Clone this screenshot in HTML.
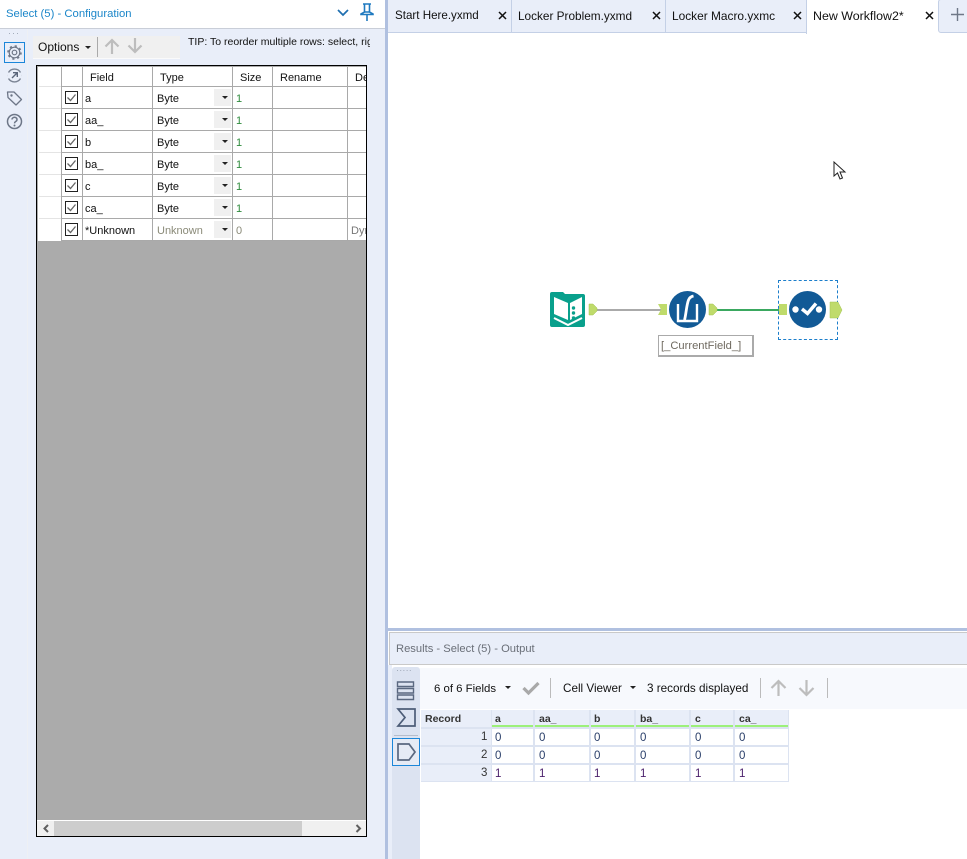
<!DOCTYPE html>
<html><head><meta charset="utf-8">
<style>
html,body{margin:0;padding:0;background:#fff}
body{width:967px;height:859px;position:relative;overflow:hidden;font-family:"Liberation Sans",sans-serif;font-size:12px;color:#111}
.a,.t{position:absolute}
.t{white-space:nowrap;line-height:14px}
svg{position:absolute;overflow:visible}
.l{position:absolute;background:#a9a9a9}
.g{font-size:11px}
.s{font-size:11px;color:#2e8b3d}
.d{position:absolute;left:177px;width:17px;height:17px;background:#f0f0f0}
.c{position:absolute;left:185px;border:3px solid transparent;border-top:3px solid #222}
.h{position:absolute;left:2px;width:22px;height:1px;background:#e4e4e4}
.w{position:absolute;height:16px;background:#fff}
.v{font-size:11.500px;color:#2a3f6a}
.u{font-size:11.500px;color:#4a1f6a}
.b{font-weight:bold;font-size:10.500px;color:#333}
.ch2{position:absolute;height:15px;top:710px;background:#e9eef9;border-bottom:2px solid #9cf07a}
</style></head><body>
<!-- left panel -->
<div class="a" style="left:0;top:0;width:385px;height:859px;background:#e9eef9"></div>
<div class="a" style="left:0;top:0;width:385px;height:28px;background:#fff;border-bottom:1px solid #c9ced8"></div>
<div class="a" style="left:385px;top:0;width:3px;height:859px;background:#b0c0e0"></div>
<div class="a" style="left:27px;top:29px;width:1px;height:830px;background:#eef0f4"></div>
<div class="t" style="left:6px;top:7px;color:#1b86c9;font-size:11.300px">Select (5) - Configuration</div>
<svg style="left:337px;top:8px" width="12" height="10"><path d="M1 2l5 5 5-5" fill="none" stroke="#1f6fb0" stroke-width="1.7"/></svg>
<svg style="left:360px;top:3px" width="14" height="19"><path d="M3 1h8M4.500 1v8M9.500 1v8M1 11l3.500-2h5L13 11v.5H1zM7 12v6" fill="none" stroke="#1f7ac0" stroke-width="1.6"/></svg>
<!-- side icons -->
<div class="t" style="left:8px;top:29px;color:#9aa3b2;font-size:9px;letter-spacing:1px;line-height:8px">···</div>
<div class="a" style="left:4px;top:42px;width:19px;height:19px;border:1px solid #1b86d9"></div>
<svg style="left:6px;top:44px" width="17" height="17" viewBox="0 0 17 17"><circle cx="8.500" cy="8.500" r="2.300" fill="none" stroke="#6d7687" stroke-width="1.200"/><circle cx="8.500" cy="8.500" r="5.300" fill="none" stroke="#6d7687" stroke-width="1.200"/><circle cx="8.500" cy="8.500" r="6.500" fill="none" stroke="#6d7687" stroke-width="1.600" stroke-dasharray="2.200 2.900"/></svg>
<svg style="left:6px;top:67px" width="17" height="17" viewBox="0 0 17 17"><path d="M2.500 5.500A7 7 0 0 1 14.500 5.500M2.500 11.500A7 7 0 0 0 14.500 11.500M1.600 8.500h.1M15.400 8.500h.1" fill="none" stroke="#7b8494" stroke-width="1.400"/><path d="M6 11l5-5M7 5.700h4.300V10" fill="none" stroke="#59657a" stroke-width="1.400"/></svg>
<svg style="left:6px;top:90px" width="17" height="17" viewBox="0 0 17 17"><path d="M1.500 2h6.500l7.500 7.500-5.500 5.500L2 7.500z" fill="none" stroke="#6d7687" stroke-width="1.300" stroke-linejoin="round"/><circle cx="5.500" cy="5.500" r="1.200" fill="#6d7687"/></svg>
<svg style="left:6px;top:113px" width="17" height="17" viewBox="0 0 17 17"><circle cx="8.500" cy="8.500" r="7" fill="none" stroke="#6d7687" stroke-width="1.500"/><path d="M6 6.500a2.500 2.200 0 1 1 3.800 1.900c-.9.6-1.300 1-1.300 2" fill="none" stroke="#6d7687" stroke-width="1.500"/><circle cx="8.500" cy="12.500" r="1" fill="#6d7687"/></svg>
<!-- options toolbar -->
<div class="a" style="left:33px;top:36px;width:147px;height:22px;background:#f0f0f0;border-bottom:1px solid #fafafa"></div>
<div class="t" style="left:38px;top:40px">Options</div>
<div class="a" style="left:85px;top:46px;border:3px solid transparent;border-top:3px solid #222"></div>
<div class="a" style="left:97px;top:37px;width:1px;height:20px;background:#aaa"></div>
<svg style="left:104px;top:37px" width="18" height="18"><path d="M8 17V3M1.500 9.500L8 3l6.500 6.500" fill="none" stroke="#bdbdbd" stroke-width="2.200"/></svg>
<svg style="left:127px;top:37px" width="18" height="18"><path d="M8 1v14M1.500 8.500L8 15l6.500-6.500" fill="none" stroke="#bdbdbd" stroke-width="2.200"/></svg>
<div class="a" style="left:188px;top:35px;width:182px;height:14px;overflow:hidden"><div class="t" style="left:0;top:0;font-size:10.500px">TIP: To reorder multiple rows: select, right click and drag</div></div>
<!-- grid -->
<div class="a" style="left:36px;top:65px;width:329px;height:770px;border:1px solid #000;background:#ababab;overflow:hidden">
 <div class="a" style="left:1px;top:1px;width:329px;height:174px;background:#fff"></div>
 <div class="l" style="left:24px;top:1px;width:1px;height:174px"></div>
 <div class="l" style="left:45px;top:1px;width:1px;height:174px"></div>
 <div class="l" style="left:115px;top:1px;width:1px;height:174px"></div>
 <div class="l" style="left:195px;top:1px;width:1px;height:174px"></div>
 <div class="l" style="left:235px;top:1px;width:1px;height:174px"></div>
 <div class="l" style="left:310px;top:1px;width:1px;height:174px"></div>
 <div class="l" style="left:24px;top:20px;width:305px;height:1px"></div>
 <div class="l" style="left:24px;top:42px;width:305px;height:1px"></div>
 <div class="l" style="left:24px;top:64px;width:305px;height:1px"></div>
 <div class="l" style="left:24px;top:86px;width:305px;height:1px"></div>
 <div class="l" style="left:24px;top:108px;width:305px;height:1px"></div>
 <div class="l" style="left:24px;top:130px;width:305px;height:1px"></div>
 <div class="l" style="left:24px;top:152px;width:305px;height:1px"></div>
 <div class="l" style="left:24px;top:174px;width:305px;height:1px"></div>
 <div class="h" style="top:20px"></div>
 <div class="h" style="top:42px"></div>
 <div class="h" style="top:64px"></div>
 <div class="h" style="top:86px"></div>
 <div class="h" style="top:108px"></div>
 <div class="h" style="top:130px"></div>
 <div class="h" style="top:152px"></div>
 <div class="t g" style="left:53px;top:5px">Field</div>
 <div class="t g" style="left:123px;top:5px">Type</div>
 <div class="t g" style="left:203px;top:5px">Size</div>
 <div class="t g" style="left:243px;top:5px">Rename</div>
 <div class="t g" style="left:318px;top:5px;width:11px;overflow:hidden">Description</div>

 <div class="t g" style="left:48px;top:26px">a</div>
 <div class="t g" style="left:48px;top:48px">aa_</div>
 <div class="t g" style="left:48px;top:70px">b</div>
 <div class="t g" style="left:48px;top:92px">ba_</div>
 <div class="t g" style="left:48px;top:114px">c</div>
 <div class="t g" style="left:48px;top:136px">ca_</div>
 <div class="t g" style="left:48px;top:158px">*Unknown</div>

 <div class="t g" style="left:120px;top:26px">Byte</div>
 <div class="t g" style="left:120px;top:48px">Byte</div>
 <div class="t g" style="left:120px;top:70px">Byte</div>
 <div class="t g" style="left:120px;top:92px">Byte</div>
 <div class="t g" style="left:120px;top:114px">Byte</div>
 <div class="t g" style="left:120px;top:136px">Byte</div>
 <div class="t g" style="left:120px;top:158px;color:#8a8a78">Unknown</div>

 <div class="t s" style="left:199px;top:26px">1</div>
 <div class="t s" style="left:199px;top:48px">1</div>
 <div class="t s" style="left:199px;top:70px">1</div>
 <div class="t s" style="left:199px;top:92px">1</div>
 <div class="t s" style="left:199px;top:114px">1</div>
 <div class="t s" style="left:199px;top:136px">1</div>
 <div class="t g" style="left:199px;top:158px;color:#8a8a78">0</div>
 <div class="a" style="left:314px;top:158px;width:15px;height:15px;overflow:hidden"><div class="t g" style="left:0;top:0;color:#777">Dynamic</div></div>

 <!-- dropdown buttons -->
 <div class="d" style="top:23px"></div>
 <div class="d" style="top:45px"></div>
 <div class="d" style="top:67px"></div>
 <div class="d" style="top:89px"></div>
 <div class="d" style="top:111px"></div>
 <div class="d" style="top:133px"></div>
 <div class="d" style="top:155px"></div>
 <div class="c" style="top:30px"></div>
 <div class="c" style="top:52px"></div>
 <div class="c" style="top:74px"></div>
 <div class="c" style="top:96px"></div>
 <div class="c" style="top:118px"></div>
 <div class="c" style="top:140px"></div>
 <div class="c" style="top:162px"></div>
 <!-- checkboxes -->
 <svg style="left:28px;top:25px" width="14" height="14"><rect x=".5" y=".5" width="12" height="12" fill="#fff" stroke="#222"/><path d="M2.500 6.500l3 3 5-6" fill="none" stroke="#666" stroke-width="1.300"/></svg>
 <svg style="left:28px;top:47px" width="14" height="14"><rect x=".5" y=".5" width="12" height="12" fill="#fff" stroke="#222"/><path d="M2.500 6.500l3 3 5-6" fill="none" stroke="#666" stroke-width="1.300"/></svg>
 <svg style="left:28px;top:69px" width="14" height="14"><rect x=".5" y=".5" width="12" height="12" fill="#fff" stroke="#222"/><path d="M2.500 6.500l3 3 5-6" fill="none" stroke="#666" stroke-width="1.300"/></svg>
 <svg style="left:28px;top:91px" width="14" height="14"><rect x=".5" y=".5" width="12" height="12" fill="#fff" stroke="#222"/><path d="M2.500 6.500l3 3 5-6" fill="none" stroke="#666" stroke-width="1.300"/></svg>
 <svg style="left:28px;top:113px" width="14" height="14"><rect x=".5" y=".5" width="12" height="12" fill="#fff" stroke="#222"/><path d="M2.500 6.500l3 3 5-6" fill="none" stroke="#666" stroke-width="1.300"/></svg>
 <svg style="left:28px;top:135px" width="14" height="14"><rect x=".5" y=".5" width="12" height="12" fill="#fff" stroke="#222"/><path d="M2.500 6.500l3 3 5-6" fill="none" stroke="#666" stroke-width="1.300"/></svg>
 <svg style="left:28px;top:157px" width="14" height="14"><rect x=".5" y=".5" width="12" height="12" fill="#fff" stroke="#222"/><path d="M2.500 6.500l3 3 5-6" fill="none" stroke="#666" stroke-width="1.300"/></svg>
 <!-- scrollbar -->
 <div class="a" style="left:0;top:754px;width:329px;height:16px;background:#f0f0f0;border-top:1px solid #fff;box-sizing:border-box"></div>
 <div class="a" style="left:17px;top:755px;width:248px;height:15px;background:#cdcdcd"></div>
 <svg style="left:5px;top:758px" width="9" height="9"><path d="M6 1L2.500 4.500 6 8" fill="none" stroke="#606060" stroke-width="2"/></svg>
 <svg style="left:317px;top:758px" width="9" height="9"><path d="M2.500 1L6 4.500 2.500 8" fill="none" stroke="#606060" stroke-width="2"/></svg>
</div>

<!-- tabs -->
<div class="a" style="left:388px;top:0;width:579px;height:33px;background:#e9eef9;border-bottom:1px solid #c4d0e6;box-sizing:border-box"></div>
<div class="a" style="left:511px;top:0;width:1px;height:33px;background:#c4d0e6"></div>
<div class="a" style="left:665px;top:0;width:1px;height:33px;background:#c4d0e6"></div>
<div class="a" style="left:806px;top:0;width:132px;height:34px;background:#fff;border-left:1px solid #c4d0e6;box-sizing:border-box"></div>
<div class="a" style="left:938px;top:0;width:29px;height:33px;background:#fff"></div>
<div class="a" style="left:938px;top:-1px;width:40px;height:34px;background:#e9eef9;border:1px solid #c4d0e6;border-radius:3px;box-sizing:border-box"></div>
<div class="t" style="left:395px;top:9px;font-size:11.600px">Start Here.yxmd</div>
<div class="t" style="left:518px;top:9px;font-size:11.800px">Locker Problem.yxmd</div>
<div class="t" style="left:672px;top:9px;font-size:11.900px">Locker Macro.yxmc</div>
<div class="t" style="left:813px;top:9px;font-size:12.400px">New Workflow2*</div>
<svg style="left:498px;top:11px" width="10" height="10"><path d="M1 1l7 7M8 1L1 8" stroke="#111" stroke-width="1.500" fill="none"/></svg>
<svg style="left:652px;top:11px" width="10" height="10"><path d="M1 1l7 7M8 1L1 8" stroke="#111" stroke-width="1.500" fill="none"/></svg>
<svg style="left:793px;top:11px" width="10" height="10"><path d="M1 1l7 7M8 1L1 8" stroke="#111" stroke-width="1.500" fill="none"/></svg>
<svg style="left:925px;top:11px" width="10" height="10"><path d="M1 1l7 7M8 1L1 8" stroke="#111" stroke-width="1.500" fill="none"/></svg>
<svg style="left:951px;top:8px" width="13" height="13"><path d="M6.500 0v13M0 6.500h13" stroke="#6f7888" stroke-width="1.400"/></svg>

<!-- canvas cursor -->
<svg style="left:833px;top:161px" width="14" height="20"><path d="M1 1v14l3.500-3 2.500 6 2.500-1-2.500-6h5z" fill="#fff" stroke="#222" stroke-width="1"/></svg>

<!-- connections -->
<div class="a" style="left:597px;top:309px;width:64px;height:2px;background:#aaa"></div>
<div class="a" style="left:717px;top:309px;width:66px;height:2px;background:#3aa860"></div>
<!-- book tool -->
<svg style="left:550px;top:292px" width="35" height="35" viewBox="0 0 35 35"><path d="M2 0h11l2 2h18a2 2 0 0 1 2 2v29a2 2 0 0 1-2 2H2a2 2 0 0 1-2-2V2a2 2 0 0 1 2-2z" fill="#09a08c"/><path d="M4 5l14 6v17L4 22zM20 11l12-6v17l-12 6z" fill="#fff"/><path d="M4 26l14 7 14-7" fill="none" stroke="#fff" stroke-width="2"/><circle cx="23.500" cy="16" r="1.700" fill="#09a08c"/><circle cx="23.500" cy="21" r="1.700" fill="#09a08c"/><circle cx="23.500" cy="26" r="1.700" fill="#09a08c"/></svg>
<!-- anchors -->
<svg style="left:589px;top:304px" width="9" height="11"><path d="M0 0h4l4 4v3l-4 4H0z" fill="#bfdb6b" stroke="#a5c455" stroke-width=".5"/></svg>
<svg style="left:658px;top:304px" width="9" height="11"><path d="M0 0h9v11H0l3-5.500z" fill="#bfdb6b"/></svg>
<svg style="left:709px;top:304px" width="9" height="11"><path d="M0 0h4l4 4v3l-4 4H0z" fill="#bfdb6b" stroke="#a5c455" stroke-width=".5"/></svg>
<!-- formula tool -->
<svg style="left:669px;top:291px" width="37" height="37" viewBox="0 0 37 37"><circle cx="18.500" cy="18.500" r="18.500" fill="#125a96"/><path d="M9 13v17h19V13" fill="none" stroke="#fff" stroke-width="2.400"/><path d="M15.500 29c1.500-5 2-15 4-20 .8-2 2.500-3.500 5-4" fill="none" stroke="#fff" stroke-width="2.800"/></svg>
<div class="a" style="left:658px;top:335px;width:93px;height:19px;background:#fff;border:1px solid #aaa;border-bottom-width:2px;border-right-width:2px;box-sizing:content-box"></div>
<div class="t" style="left:661px;top:339px;font-size:11.200px;color:#6f6a60">[_CurrentField_]</div>
<!-- select tool -->
<div class="a" style="left:778px;top:280px;width:58px;height:58px;border:1px dashed #1c7ecb"></div>
<svg style="left:779px;top:304px" width="8" height="11"><path d="M0 0h8v11H0z" fill="#bfdb6b"/></svg>
<svg style="left:830px;top:302px" width="12" height="16"><path d="M0 0h8l4 8-4 8H0z" fill="#bfdb6b" stroke="#a5c455" stroke-width=".5"/></svg>
<svg style="left:789px;top:291px" width="37" height="37" viewBox="0 0 37 37"><circle cx="18.500" cy="18.500" r="18.500" fill="#125a96"/><circle cx="6.500" cy="18.500" r="3.200" fill="#fff"/><circle cx="30" cy="18.500" r="3.200" fill="#fff"/><path d="M13 18l5.500 4.500L27 12.500" fill="none" stroke="#fff" stroke-width="3.400"/></svg>

<!-- results -->
<div class="a" style="left:388px;top:628px;width:579px;height:3px;background:#b0c0e0"></div>
<div class="a" style="left:389px;top:632px;width:578px;height:31px;background:#e9eef9;border:1px solid #c9c9c9;border-right:0;box-sizing:content-box"></div>
<div class="t" style="left:396px;top:642px;color:#6a6f78;font-size:11.200px">Results - Select (5) - Output</div>
<div class="a" style="left:388px;top:665px;width:579px;height:194px;background:#fff"></div>
<div class="a" style="left:388px;top:665px;width:4px;height:194px;background:#e9eef9"></div>
<div class="a" style="left:392px;top:667px;width:28px;height:192px;background:#dce3f1;border-radius:3px 3px 0 0"></div>
<div class="t" style="left:396px;top:666px;color:#9aa3b2;font-size:9px;line-height:8px;letter-spacing:.2px">·····</div>
<div class="a" style="left:420px;top:668px;width:547px;height:41px;background:#f7f9fd"></div>
<svg style="left:397px;top:681px" width="18" height="20"><path d="M.5 1h16v4.500H.5zM.5 7.500h16V12H.5zM.5 14h16v4.500H.5z" fill="none" stroke="#5a6880" stroke-width="1.400"/></svg>
<svg style="left:397px;top:708px" width="20" height="20"><path d="M1 1h17v17H1l7-8.500z" fill="none" stroke="#4d5d78" stroke-width="1.700"/></svg>
<div class="a" style="left:394px;top:735px;width:24px;height:1px;background:#b5bdcc"></div>
<div class="a" style="left:392px;top:738px;width:26px;height:26px;border:1px solid #1b86d9;background:#e6ebf5"></div>
<svg style="left:397px;top:743px" width="20" height="18"><path d="M1 1h11l6 8-6 8H1z" fill="none" stroke="#5a6880" stroke-width="1.700"/></svg>
<div class="t" style="left:434px;top:682px;font-size:11.400px">6 of 6 Fields</div>
<div class="a" style="left:505px;top:686px;border:3px solid transparent;border-top:3px solid #222"></div>
<svg style="left:522px;top:681px" width="18" height="14"><path d="M1.500 7l5 5 10-10" fill="none" stroke="#a9a9a9" stroke-width="3.200"/></svg>
<div class="a" style="left:550px;top:678px;width:1px;height:20px;background:#bbb"></div>
<div class="t" style="left:563px;top:682px;font-size:11.700px">Cell Viewer</div>
<div class="a" style="left:630px;top:686px;border:3px solid transparent;border-top:3px solid #222"></div>
<div class="t" style="left:647px;top:682px;font-size:11.700px">3 records displayed</div>
<div class="a" style="left:760px;top:678px;width:1px;height:20px;background:#bbb"></div>
<svg style="left:770px;top:679px" width="18" height="18"><path d="M8.500 17V2M1.500 9l7-7 7 7" fill="none" stroke="#bdbdbd" stroke-width="2.200"/></svg>
<svg style="left:798px;top:679px" width="18" height="18"><path d="M8.500 1v15M1.500 9l7 7 7-7" fill="none" stroke="#bdbdbd" stroke-width="2.200"/></svg>
<div class="a" style="left:827px;top:678px;width:1px;height:20px;background:#bbb"></div>

<!-- results table -->
<div class="a" style="left:421px;top:710px;width:368px;height:72px;background:#dce3f1"></div>
<div class="a" style="left:421px;top:710px;width:70px;height:17px;background:#e9eef9"></div>
<div class="t b" style="left:425px;top:712px">Record</div>
<div class="ch2" style="left:492px;width:41px"></div>
<div class="ch2" style="left:535px;width:54px"></div>
<div class="ch2" style="left:591px;width:43px"></div>
<div class="ch2" style="left:636px;width:53px"></div>
<div class="ch2" style="left:691px;width:42px"></div>
<div class="ch2" style="left:735px;width:53px"></div>
<div class="t b" style="left:495px;top:712px">a</div>
<div class="t b" style="left:539px;top:712px">aa_</div>
<div class="t b" style="left:594px;top:712px">b</div>
<div class="t b" style="left:640px;top:712px">ba_</div>
<div class="t b" style="left:695px;top:712px">c</div>
<div class="t b" style="left:739px;top:712px">ca_</div>

<div class="a" style="left:421px;top:729px;width:70px;height:16px;background:#e9eef9"></div>
<div class="a" style="left:421px;top:747px;width:70px;height:16px;background:#e9eef9"></div>
<div class="a" style="left:421px;top:765px;width:70px;height:16px;background:#e9eef9"></div>
<div class="t" style="left:481px;top:730px;font-size:11.500px;color:#333">1</div>
<div class="t" style="left:481px;top:748px;font-size:11.500px;color:#333">2</div>
<div class="t" style="left:481px;top:766px;font-size:11.500px;color:#333">3</div>

<div class="w" style="left:492px;top:729px;width:41px"></div>
<div class="w" style="left:535px;top:729px;width:54px"></div>
<div class="w" style="left:591px;top:729px;width:43px"></div>
<div class="w" style="left:636px;top:729px;width:53px"></div>
<div class="w" style="left:691px;top:729px;width:42px"></div>
<div class="w" style="left:735px;top:729px;width:53px"></div>
<div class="w" style="left:492px;top:747px;width:41px"></div>
<div class="w" style="left:535px;top:747px;width:54px"></div>
<div class="w" style="left:591px;top:747px;width:43px"></div>
<div class="w" style="left:636px;top:747px;width:53px"></div>
<div class="w" style="left:691px;top:747px;width:42px"></div>
<div class="w" style="left:735px;top:747px;width:53px"></div>
<div class="w" style="left:492px;top:765px;width:41px"></div>
<div class="w" style="left:535px;top:765px;width:54px"></div>
<div class="w" style="left:591px;top:765px;width:43px"></div>
<div class="w" style="left:636px;top:765px;width:53px"></div>
<div class="w" style="left:691px;top:765px;width:42px"></div>
<div class="w" style="left:735px;top:765px;width:53px"></div>

<div class="t v" style="left:495px;top:731px">0</div>
<div class="t v" style="left:539px;top:731px">0</div>
<div class="t v" style="left:594px;top:731px">0</div>
<div class="t v" style="left:640px;top:731px">0</div>
<div class="t v" style="left:695px;top:731px">0</div>
<div class="t v" style="left:739px;top:731px">0</div>
<div class="t v" style="left:495px;top:749px">0</div>
<div class="t v" style="left:539px;top:749px">0</div>
<div class="t v" style="left:594px;top:749px">0</div>
<div class="t v" style="left:640px;top:749px">0</div>
<div class="t v" style="left:695px;top:749px">0</div>
<div class="t v" style="left:739px;top:749px">0</div>
<div class="t u" style="left:495px;top:767px">1</div>
<div class="t u" style="left:539px;top:767px">1</div>
<div class="t u" style="left:594px;top:767px">1</div>
<div class="t u" style="left:640px;top:767px">1</div>
<div class="t u" style="left:695px;top:767px">1</div>
<div class="t u" style="left:739px;top:767px">1</div>
</body></html>
